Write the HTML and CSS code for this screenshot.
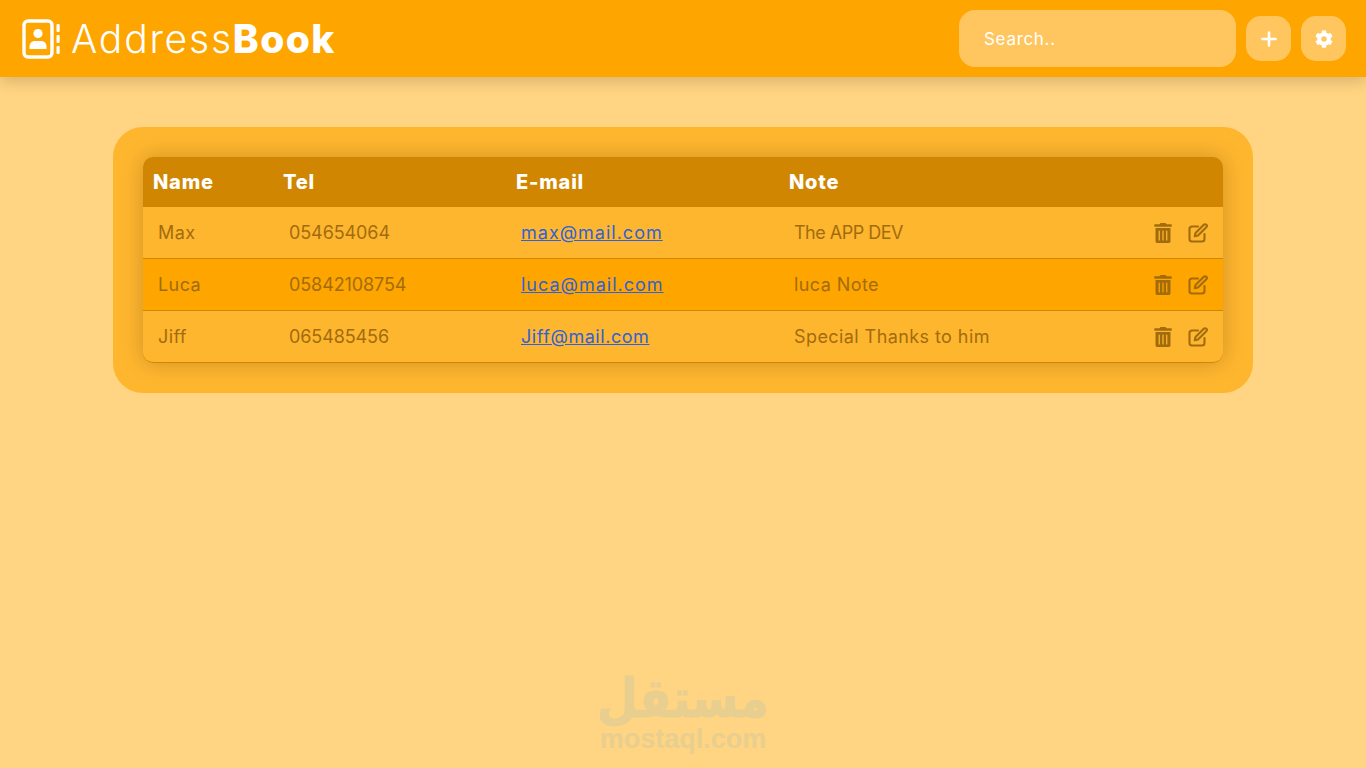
FILE: index.html
```html
<!DOCTYPE html>
<html lang="en">
<head>
  <meta charset="UTF-8" />
  <meta name="viewport" content="width=device-width, initial-scale=1.0">
  <title>AddressBook</title>
  <link rel="stylesheet" href="styles.css">
</head>
<body>
<header class="topbar">
  <div class="brand">
    <svg class="brand-icon" viewBox="0 0 38 40" width="38" height="40" fill="none">
      <rect x="2" y="2" width="28" height="36" rx="4" stroke="#fff" stroke-width="3.4"/>
      <circle cx="16" cy="14.5" r="4.6" fill="#fff"/>
      <path d="M7.5 30v-2.6c0-3.2 2.4-5.4 5.4-5.4h6.2c3 0 5.4 2.200 5.400 5.400V30z" fill="#fff"/>
      <rect x="34.500" y="5" width="3.200" height="8" rx="1" fill="#fff"/>
      <rect x="34.500" y="16" width="3.200" height="8" rx="1" fill="#fff"/>
      <rect x="34.500" y="27" width="3.200" height="8" rx="1" fill="#fff"/>
    </svg>
    <span class="brand-name">Address<b>Book</b></span>
  </div>
  <div class="tools">
    <input class="search" type="text" placeholder="Search..">
    <button class="tool-btn" aria-label="Add">
      <svg viewBox="0 0 16 16" width="16" height="16"><path d="M8 1.500v13M1.500 8h13" stroke="#fff" stroke-width="2.600" stroke-linecap="round"/></svg>
    </button>
    <button class="tool-btn" aria-label="Settings">
      <svg viewBox="0 0 512 512" width="18" height="18"><path fill="#fff" d="M487.400 315.700l-42.600-24.600c4.300-23.200 4.300-47 0-70.200l42.600-24.600c4.900-2.800 7.100-8.600 5.500-14-11.100-35.600-30-67.800-54.700-94.600-3.800-4.100-10-5.100-14.800-2.300L380.800 110c-17.900-15.400-38.500-27.300-60.800-35.100V25.800c0-5.600-3.900-10.500-9.400-11.700-36.700-8.200-74.300-7.800-109.200 0-5.500 1.200-9.400 6.100-9.400 11.700V75c-22.200 7.900-42.800 19.800-60.800 35.100L88.700 85.500c-4.900-2.800-11-1.900-14.800 2.300-24.700 26.700-43.600 58.900-54.700 94.600-1.700 5.400.6 11.200 5.500 14L67.300 221c-4.300 23.200-4.300 47 0 70.200l-42.600 24.600c-4.900 2.800-7.100 8.600-5.500 14 11.100 35.600 30 67.800 54.700 94.600 3.800 4.100 10 5.100 14.800 2.300l42.600-24.600c17.900 15.400 38.500 27.300 60.800 35.100v49.200c0 5.600 3.900 10.500 9.400 11.700 36.700 8.200 74.300 7.800 109.200 0 5.500-1.200 9.400-6.100 9.400-11.700v-49.200c22.200-7.900 42.800-19.800 60.800-35.100l42.600 24.600c4.900 2.800 11 1.900 14.800-2.300 24.700-26.700 43.600-58.900 54.700-94.600 1.500-5.500-.7-11.300-5.600-14.100zM256 336c-44.100 0-80-35.900-80-80s35.900-80 80-80 80 35.900 80 80-35.900 80-80 80z"/></svg>
    </button>
  </div>
</header>

<main class="panel">
  <table class="contacts">
    <thead>
      <tr>
        <th class="col-name">Name</th>
        <th class="col-tel">Tel</th>
        <th class="col-mail">E-mail</th>
        <th>Note</th>
        <th class="col-actions"></th>
      </tr>
    </thead>
    <tbody>
      <tr>
        <td>Max</td>
        <td class="tel">054654064</td>
        <td><a href="#">max@mail.com</a></td>
        <td class="caps">The APP DEV</td>
        <td class="actions">
          <svg class="icon" viewBox="0 0 448 512" width="18" height="20"><path d="M32 464a48 48 0 0 0 48 48h288a48 48 0 0 0 48-48V128H32zm272-256a16 16 0 0 1 32 0v224a16 16 0 0 1-32 0zm-96 0a16 16 0 0 1 32 0v224a16 16 0 0 1-32 0zm-96 0a16 16 0 0 1 32 0v224a16 16 0 0 1-32 0zM432 32H312l-9.400-18.700A24 24 0 0 0 281.100 0H166.800a23.700 23.700 0 0 0-21.400 13.300L136 32H16A16 16 0 0 0 0 48v32a16 16 0 0 0 16 16h416a16 16 0 0 0 16-16V48a16 16 0 0 0-16-16z"/></svg>
          <svg class="icon" viewBox="0 0 20 20" width="20" height="20" fill="none"><path d="M10 3.500H4A2.500 2.500 0 0 0 1.500 6v10A2.500 2.500 0 0 0 4 18.500h10a2.500 2.500 0 0 0 2.500-2.500v-5" class="line"/><path d="M7.500 10l8.300-8.300a1.700 1.700 0 0 1 2.500 2.500L10 12.500l-3.200.700z" class="line"/></svg>
        </td>
      </tr>
      <tr>
        <td>Luca</td>
        <td class="tel">05842108754</td>
        <td><a href="#">luca@mail.com</a></td>
        <td>luca Note</td>
        <td class="actions">
          <svg class="icon" viewBox="0 0 448 512" width="18" height="20"><path d="M32 464a48 48 0 0 0 48 48h288a48 48 0 0 0 48-48V128H32zm272-256a16 16 0 0 1 32 0v224a16 16 0 0 1-32 0zm-96 0a16 16 0 0 1 32 0v224a16 16 0 0 1-32 0zm-96 0a16 16 0 0 1 32 0v224a16 16 0 0 1-32 0zM432 32H312l-9.400-18.700A24 24 0 0 0 281.100 0H166.800a23.700 23.700 0 0 0-21.400 13.300L136 32H16A16 16 0 0 0 0 48v32a16 16 0 0 0 16 16h416a16 16 0 0 0 16-16V48a16 16 0 0 0-16-16z"/></svg>
          <svg class="icon" viewBox="0 0 20 20" width="20" height="20" fill="none"><path d="M10 3.500H4A2.500 2.500 0 0 0 1.500 6v10A2.500 2.500 0 0 0 4 18.500h10a2.500 2.500 0 0 0 2.500-2.500v-5" class="line"/><path d="M7.500 10l8.300-8.300a1.700 1.700 0 0 1 2.500 2.500L10 12.500l-3.200.700z" class="line"/></svg>
        </td>
      </tr>
      <tr>
        <td>Jiff</td>
        <td class="tel">065485456</td>
        <td><a class="tight" href="#">Jiff@mail.com</a></td>
        <td>Special Thanks to him</td>
        <td class="actions">
          <svg class="icon" viewBox="0 0 448 512" width="18" height="20"><path d="M32 464a48 48 0 0 0 48 48h288a48 48 0 0 0 48-48V128H32zm272-256a16 16 0 0 1 32 0v224a16 16 0 0 1-32 0zm-96 0a16 16 0 0 1 32 0v224a16 16 0 0 1-32 0zm-96 0a16 16 0 0 1 32 0v224a16 16 0 0 1-32 0zM432 32H312l-9.400-18.700A24 24 0 0 0 281.100 0H166.800a23.700 23.700 0 0 0-21.400 13.300L136 32H16A16 16 0 0 0 0 48v32a16 16 0 0 0 16 16h416a16 16 0 0 0 16-16V48a16 16 0 0 0-16-16z"/></svg>
          <svg class="icon" viewBox="0 0 20 20" width="20" height="20" fill="none"><path d="M10 3.500H4A2.500 2.500 0 0 0 1.500 6v10A2.500 2.500 0 0 0 4 18.500h10a2.500 2.500 0 0 0 2.500-2.500v-5" class="line"/><path d="M7.500 10l8.300-8.300a1.700 1.700 0 0 1 2.500 2.500L10 12.500l-3.200.700z" class="line"/></svg>
        </td>
      </tr>
    </tbody>
  </table>
</main>

<div class="watermark">
  <div class="watermark-ar" lang="ar" dir="rtl">مستقل</div>
  <div class="watermark-en">mostaql.com</div>
</div>
</body>
</html>
```

FILE: styles.css
```css
* { box-sizing: border-box; }
html, body { height: 100%; }
body {
  margin: 0;
  background: #ffd482;
  font-family: 'Inter', 'Open Sans', sans-serif;
  overflow: hidden;
}
.topbar {
  height: 77px;
  background: #ffa500;
  display: flex;
  align-items: center;
  justify-content: space-between;
  padding: 0 20px 0 22px;
  box-shadow: 0 4px 14px rgba(0,0,0,0.16);
}
.brand {
  display: flex;
  align-items: center;
  gap: 11px;
  color: #fff;
}
.brand-name {
  font-size: 39px;
  font-weight: 300;
  letter-spacing: 1.8px;
}
.brand-name b {
  font-weight: 800;
  letter-spacing: 1.4px;
}
.tools {
  display: flex;
  align-items: center;
  gap: 10px;
}
.search {
  width: 277px;
  height: 57px;
  padding: 0 25px;
  border: none;
  border-radius: 16px;
  background: #ffc65f;
  color: #fff;
  font-family: inherit;
  font-size: 17px;
  letter-spacing: 0.7px;
  outline: none;
}
.search::placeholder { color: #fff; opacity: 1; }
.tool-btn {
  width: 45px;
  height: 45px;
  padding: 0;
  border: none;
  border-radius: 15px;
  background: #ffc65f;
  display: flex;
  align-items: center;
  justify-content: center;
  cursor: pointer;
}
.panel {
  width: 1140px;
  margin: 50px auto 0;
  padding: 30px;
  border-radius: 30px;
  background: #ffb62f;
}
.contacts {
  width: 100%;
  table-layout: fixed;
  border-collapse: separate;
  border-spacing: 0;
  border-radius: 10px;
  box-shadow: 0 0 22px rgba(0,0,0,0.2);
}
.contacts th {
  height: 50px;
  padding: 0 10px;
  background: #d08600;
  color: #fff;
  font-size: 20px;
  font-weight: 800;
  letter-spacing: 0.8px;
  text-align: left;
}
.contacts th:first-child { border-top-left-radius: 10px; }
.contacts th:last-child { border-top-right-radius: 10px; }
.col-name { width: 130px; }
.col-tel { width: 233px; }
.col-mail { width: 273px; }
.col-actions { width: 100px; }
.contacts td {
  height: 52px;
  padding: 0 15px;
  border-bottom: 1px solid #d08600;
  color: #a26c0c;
  font-size: 18px;
  letter-spacing: 0.42px;
  white-space: nowrap;
}
.contacts td.tel {
  padding-left: 16px;
  letter-spacing: -0.1px;
}
.contacts td.caps { letter-spacing: -0.5px; }
.contacts tbody tr:nth-child(even) td { background: #ffa500; }
.contacts tbody tr:last-child td:first-child { border-bottom-left-radius: 10px; }
.contacts tbody tr:last-child td:last-child { border-bottom-right-radius: 10px; }
.contacts a {
  color: #2f62d8;
  letter-spacing: 1px;
}
.contacts a.tight { letter-spacing: 0.55px; }
.contacts td.actions {
  text-align: right;
  font-size: 0;
  line-height: 0;
}
.icon {
  vertical-align: middle;
  margin-left: 16px;
  fill: #a26c0c;
}
.icon .line {
  stroke: #a26c0c;
  stroke-width: 2.1;
  stroke-linejoin: round;
  stroke-linecap: round;
  fill: none;
}
.watermark {
  position: absolute;
  left: 0;
  right: 0;
  top: 683px;
  text-align: center;
  color: #e8cf90;
  font-family: 'Liberation Sans', sans-serif;
  font-weight: 700;
}
.watermark-ar {
  font-family: 'DejaVu Sans', sans-serif;
  font-size: 47px;
  line-height: 36px;
  margin-bottom: 7px;
  -webkit-text-stroke: 1px #e8cf90;
  transform: scaleY(1.15);
  transform-origin: bottom;
}
.watermark-en {
  font-size: 27px;
  line-height: 26px;
}
```
